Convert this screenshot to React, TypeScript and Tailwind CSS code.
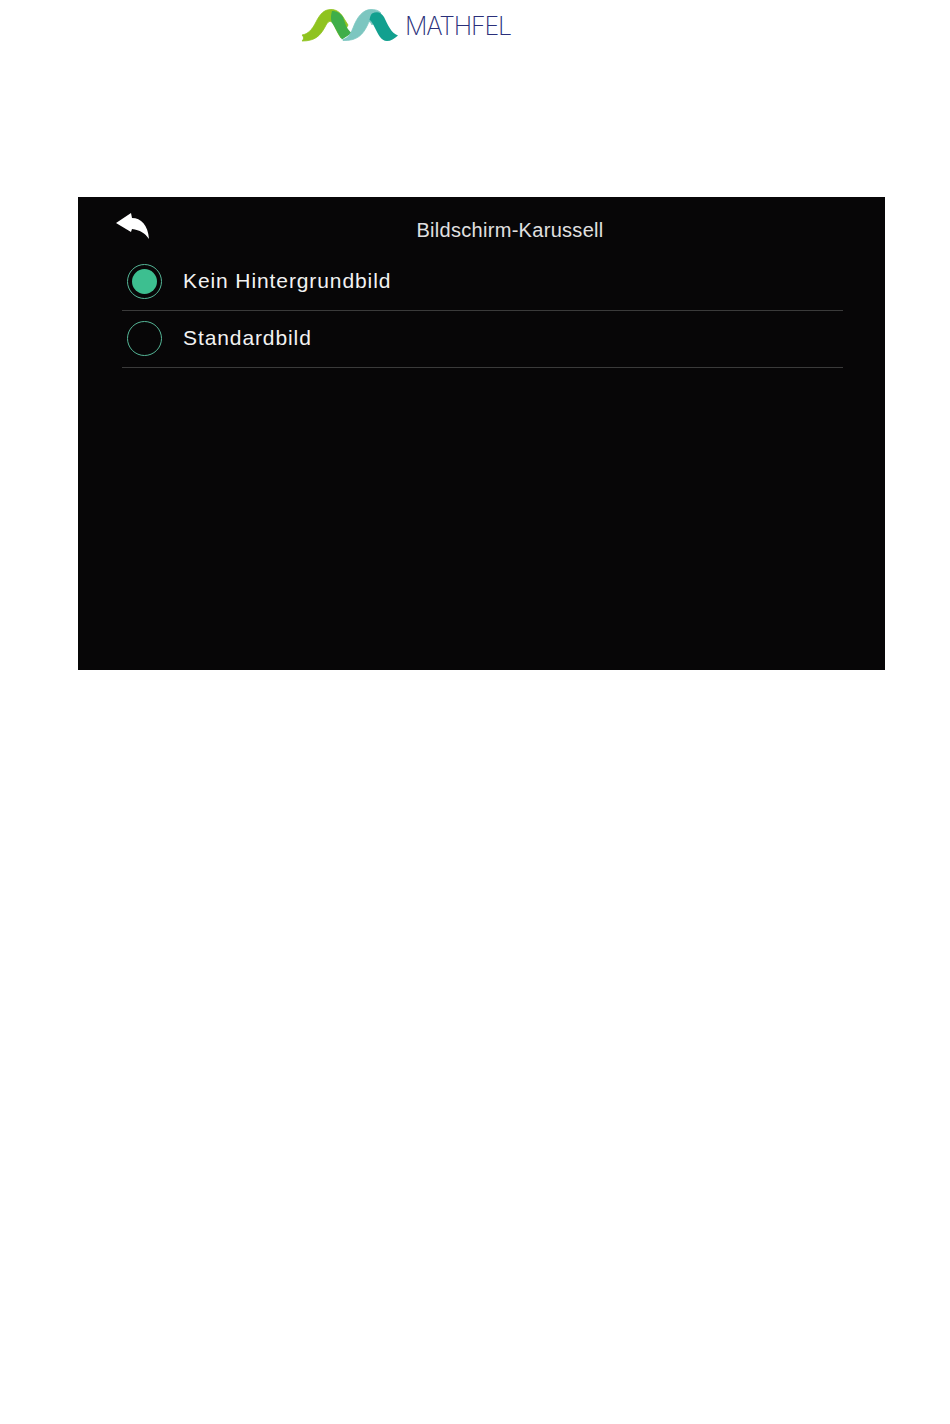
import React from "react";

function Logo() {
  return (
    <svg width="98" height="34" viewBox="300 8 98 34" className="block shrink-0">
      <path d="M302 35 C308 34 312 30 316 22 C320 14 324 9.5 331 9.5 C336 9.5 340 12 343 17 L348 25 L341 38 C338 34 335 27 333 23 C330 20 328 21 325 27 C320 36 315 41 302 41 C304 39 304 37 302 35 Z" fill="#8fc31f" stroke="#8fc31f" strokeWidth="0.8" />
      <path d="M332 11 C337 11 340 13 343 17 C345 23 347 30 352 33 L342 39.5 C338 34 335 27 331.5 22 C330.5 18 331 14 332 11 Z" fill="#3fae49" />
      <path d="M343 39.5 C348 38 350 35 353 28 C357 17 363 9.5 371 9.5 C375 9.5 378 10 381 13 L372 25 C370 21 369 21 368 24 C363 35 357 41 343 40.5 Z" fill="#7cc6c0" stroke="#7cc6c0" strokeWidth="0.8" />
      <path d="M372 13.5 C377 11 381 12 384 17 C388 25 391 33 398 35.5 C394 39 391 41 387 41 C381 41 378 34 375 28 C373 24 371 20 369.5 20 C370 17 370.5 15 372 13.5 Z" fill="#12a08f" />
    </svg>
  );
}

function Radio({ selected }: { selected?: boolean }) {
  return (
    <span className="flex h-[35px] w-[35px] shrink-0 items-center justify-center rounded-full border-[1.5px] border-[#54b596]">
      {selected && <span className="block h-[25px] w-[25px] rounded-full bg-[#3dbf90]" />}
    </span>
  );
}

function Row({ label, selected }: { label: string; selected?: boolean }) {
  return (
    <div className="flex h-[57px] items-center border-b border-[#3a3a3a] pb-[1px] pl-[5px]">
      <Radio selected={selected} />
      <span className="mb-[2px] ml-[21px] text-[21px] tracking-[0.9px] text-[#f2f2f2]">{label}</span>
    </div>
  );
}

export default function App() {
  return (
    <div className="min-h-[1424px] bg-white font-['Liberation_Sans',Arial,sans-serif]">
      <header className="flex h-[197px] items-start pl-[300px] pt-[8px]">
        <Logo />
        <span className="ml-[7px] mt-[3px] font-['Inter',sans-serif] text-[25px] font-extralight leading-[30px] tracking-[-1.2px] text-[#2a2f7a]">
          MATHFEL
        </span>
      </header>
      <main className="ml-[78px] h-[473px] w-[807px] bg-[#070607] pl-[44px] pr-[42px]">
        <div className="relative flex h-[57px] items-center justify-center pl-[55px] pt-[9px]">
          <svg
            width="34"
            height="28"
            viewBox="0 0 34 28"
            className="absolute left-[-6px] top-[15px]"
          >
            <path d="M0 11 L15 1 L16 6 C25 6 32 13 33 27 C29 21 24 18 16 17 L15 20 Z" fill="#ffffff" />
          </svg>
          <h1 className="text-[20px] font-normal tracking-[0.3px] text-[#e0e0e0]">Bildschirm-Karussell</h1>
        </div>
        <Row label="Kein Hintergrundbild" selected />
        <Row label="Standardbild" />
      </main>
    </div>
  );
}
